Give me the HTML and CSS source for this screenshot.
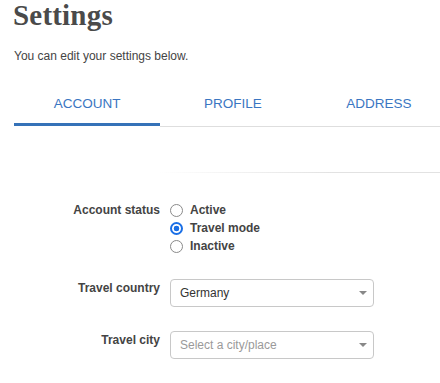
FILE: index.html
```html
<!DOCTYPE html>
<html lang="en">
<head>
<meta charset="utf-8">
<title>Settings</title>
<link rel="stylesheet" href="styles.css">
</head>
<body>
<div class="page">
  <h1 class="title">Settings</h1>
  <p class="intro">You can edit your settings below.</p>
  <nav class="tabs">
    <a class="tab tab--active">ACCOUNT</a>
    <a class="tab">PROFILE</a>
    <a class="tab">ADDRESS</a>
  </nav>
  <div class="divider"></div>
  <form class="form">
    <div class="row">
      <div class="label">Account status</div>
      <div class="radios">
        <label class="radio"><input type="radio" name="status"><span>Active</span></label>
        <label class="radio"><input type="radio" name="status" checked><span>Travel mode</span></label>
        <label class="radio"><input type="radio" name="status"><span>Inactive</span></label>
      </div>
    </div>
    <div class="row">
      <div class="label">Travel country</div>
      <div class="select"><span class="select-value">Germany</span><span class="caret"></span></div>
    </div>
    <div class="row">
      <div class="label">Travel city</div>
      <div class="select"><span class="select-value select-value--placeholder">Select a city/place</span><span class="caret"></span></div>
    </div>
  </form>
</div>
</body>
</html>
```
FILE: styles.css
```css
html, body {
  margin: 0;
  padding: 0;
  overflow: hidden;
  background: #fff;
}
.page {
  padding-left: 14px;
  font-family: "Liberation Sans", Arial, sans-serif;
  color: #444;
}
.title {
  margin: 0;
  font-family: "Liberation Serif", "Times New Roman", serif;
  font-weight: bold;
  font-size: 29px;
  line-height: 30px;
  color: #4a4a4a;
  margin-left: -1px;
  letter-spacing: 0.2px;
}
.intro {
  margin: 18px 0 0;
  font-size: 12px;
  line-height: 16px;
  color: #444;
}
.tabs {
  display: flex;
  margin-top: 20px;
  border-bottom: 1px solid #dedede;
}
.tab {
  flex: 0 0 146px;
  text-align: center;
  padding: 12px 0 14px;
  font-size: 13.5px;
  line-height: 16px;
  color: #3a76c2;
  margin-bottom: -1px;
  border-bottom: 1px solid transparent;
}
.tab--active {
  box-shadow: inset 0 -3px 0 #3572b8;
  border-bottom-color: #fff;
}
.divider {
  height: 1px;
  margin-top: 45px;
  background: linear-gradient(to right, rgba(224,224,224,0) 34%, #e2e2e2 75%);
}
.form {
  display: flex;
  flex-direction: column;
  gap: 24px;
  margin-top: 28px;
}
.row {
  display: grid;
  grid-template-columns: 146px 204px;
  column-gap: 10px;
  align-items: start;
}
.label {
  text-align: right;
  font-weight: bold;
  font-size: 12px;
  line-height: 18px;
  color: #444;
}
.radios {
  display: flex;
  flex-direction: column;
}
.radio {
  display: flex;
  align-items: center;
  gap: 7px;
  height: 18px;
  font-weight: bold;
  font-size: 12px;
  color: #444;
}
.radio input {
  appearance: none;
  -webkit-appearance: none;
  margin: 0;
  width: 13px;
  height: 13px;
  box-sizing: border-box;
  border: 1.5px solid #8a8a8a;
  border-radius: 50%;
  background: #fff;
}
.radio input:checked {
  border: 2px solid #1a6fe6;
  background: radial-gradient(circle, #1a6fe6 0 2.6px, #fff 3.1px);
}
.select {
  display: flex;
  align-items: center;
  justify-content: space-between;
  height: 28px;
  box-sizing: border-box;
  border: 1px solid #c8c8c8;
  border-radius: 4px;
  padding: 0 6px 0 9px;
  font-size: 12px;
  color: #333;
}
.select-value--placeholder {
  color: #9a9a9a;
}
.caret {
  width: 0;
  height: 0;
  border-left: 4px solid transparent;
  border-right: 4px solid transparent;
  border-top: 4px solid #888;
}
```
